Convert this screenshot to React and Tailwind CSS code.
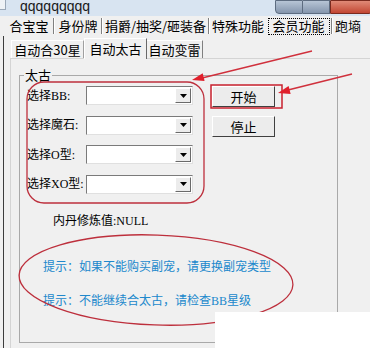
import React from 'react';

const cjk = "font-['Noto_Sans_CJK_SC',sans-serif]";
const mixed = "font-['Liberation_Serif','Noto_Sans_CJK_SC',serif]";

const Sep = () => (
  <div className="flex h-[16px] self-center">
    <div className="w-[1px] bg-[#808080]" />
    <div className="w-[1px] bg-white" />
  </div>
);

const Combo = () => (
  <div className="w-[107px] h-[19px] bg-white border border-t-[#7a7a7a] border-l-[#7a7a7a] border-b-[#e0e0e0] border-r-[#e0e0e0] flex justify-end p-[1px]">
    <div className="w-[16px] h-full bg-[#ececec] border border-t-white border-l-white border-b-[#6a6a6a] border-r-[#6a6a6a] flex items-center justify-center">
      <svg width="7" height="4" viewBox="0 0 7 4">
        <path d="M0 0h7L3.5 4z" fill="#000" />
      </svg>
    </div>
  </div>
);

const Button = ({ label }) => (
  <button className="w-[63px] h-[21px] bg-[#ececec] border border-t-white border-l-white border-b-[#404040] border-r-[#404040] text-[13px] leading-[16px] text-black">
    {label}
  </button>
);

const rows = ['选择BB:', '选择魔石:', '选择O型:', '选择XO型:'];

export default function App() {
  return (
    <div className={`relative w-[370px] h-[348px] overflow-hidden bg-[#f0f0f0] ${cjk} text-black`}>
      {/* ===== TITLE BAR ===== */}
      <div className="h-[16px] bg-[#d8e4f1] flex justify-between items-start">
        <div className="flex items-start">
          <div className="w-[6px] h-[10px] bg-[#eef2f6] border-r border-b border-[#9aa8b8]" />
          <span className="ml-[14px] -mt-[1px] text-[14px] leading-[14px] text-[#1a1a1a] font-['Liberation_Sans',sans-serif]">
            qqqqqqqqq
          </span>
        </div>
        <div className="flex h-[14px] mr-[-3px]">
          <div className="w-[28px] h-full bg-gradient-to-b from-[#b7c5d6] to-[#8596ad] border border-[#5d6c80] rounded-bl-[4px]" />
          <div className="w-[27px] h-full bg-gradient-to-b from-[#b7c5d6] to-[#8596ad] border-y border-r border-[#5d6c80]" />
          <div className="w-[43px] h-full bg-gradient-to-b from-[#e08a77] to-[#c24532] border border-[#7a2a1e] rounded-br-[4px]" />
        </div>
      </div>

      {/* ===== MAIN TABS ===== */}
      <div className="h-[20px] flex items-center ml-[5px] text-[13px] leading-[16px]">
        <div className="w-[48px] text-center">合宝宝</div>
        <Sep />
        <div className="w-[46px] text-center">身份牌</div>
        <Sep />
        <div className="w-[105px] text-center">捐爵/抽奖/砸装备</div>
        <Sep />
        <div className="w-[56px] text-center">特殊功能</div>
        <div className="w-[65px] h-[17px] flex items-center justify-center">
          <div className="w-[62px] h-[17px] border border-dotted border-black flex items-center justify-center">会员功能</div>
        </div>
        <Sep />
        <div className="pl-[2px]">跑墒</div>
      </div>

      {/* ===== BODY ===== */}
      <div className="ml-[3px] h-[312px] border-l border-[#3c3c3c] pl-[6px] pt-[2px] flex flex-col">
        <div className="h-[20px] flex items-end ml-[1px] text-[13px] leading-[16px]">
          <div className="w-[73px] h-[18px] border-t border-l border-white border-r border-r-[#a0a0a0] flex items-center justify-center">
            自动合30星
          </div>
          <div className="w-[63px] h-[21px] -mb-[1px] bg-[#f0f0f0] border-t border-l border-white border-r border-r-[#696969] flex items-center justify-center relative">
            自动太古
          </div>
          <div className="w-[56px] h-[18px] border-t border-white border-r border-r-[#808080] flex items-center justify-center">
            自动变雷
          </div>
        </div>

        <div className="flex-1 border-t border-l border-[#d4d4d4] pt-[8px] pl-[8px]">
          <fieldset className="w-[319px] h-[276px] border border-[#a9a9a9]">
            <legend className="ml-[4px] px-[1px] text-[13px] leading-[16px]">太古</legend>

            <div className="flex mt-[3px] pl-[7px]">
              <div className="flex flex-col gap-[10.5px]">
                {rows.map((r) => (
                  <div key={r} className="flex items-center h-[19px]">
                    <span className={`w-[59px] text-[12px] leading-[16px] ${mixed}`}>{r}</span>
                    <Combo />
                  </div>
                ))}
              </div>
              <div className="ml-[19px] flex flex-col gap-[9px]">
                <Button label="开始" />
                <Button label="停止" />
              </div>
            </div>

            <div className={`mt-[19px] ml-[33px] text-[12px] leading-[16px] ${mixed}`}>内丹修炼值:NULL</div>

            <div className="mt-[29px] ml-[23px] text-[12px] leading-[16px] text-[#2088cc]">
              提示：如果不能购买副宠，请更换副宠类型
            </div>
            <div className={`mt-[19px] ml-[23px] text-[12px] leading-[16px] text-[#2088cc] ${mixed}`}>
              提示：不能继续合太古，请检查BB星级
            </div>
          </fieldset>
        </div>
      </div>

      {/* ===== ANNOTATIONS ===== */}
      <svg className="absolute inset-0 pointer-events-none" width="370" height="348" viewBox="0 0 370 348">
        <rect x="27" y="82" width="177" height="121" rx="17" fill="none" stroke="#bd2f3c" strokeWidth="1.3" />
        <rect x="211" y="85" width="71" height="23" fill="none" stroke="#c8202e" strokeWidth="1.5" />
        <ellipse cx="156" cy="280" rx="137" ry="45" fill="none" stroke="#bd2f3c" strokeWidth="1.3" transform="rotate(2 156 280)" />
        <line x1="312" y1="51" x2="202" y2="78" stroke="#d0303c" strokeWidth="1.3" />
        <polygon points="192,80 204.6,81.1 202.7,73.3" fill="#e0202c" />
        <line x1="352" y1="74" x2="288" y2="90" stroke="#d0303c" strokeWidth="1.3" />
        <polygon points="278,93 290.6,93.9 288.6,86.1" fill="#e0202c" />
      </svg>

      <div className="absolute left-[215px] top-[312px] w-[155px] h-[36px] bg-white" />
    </div>
  );
}
